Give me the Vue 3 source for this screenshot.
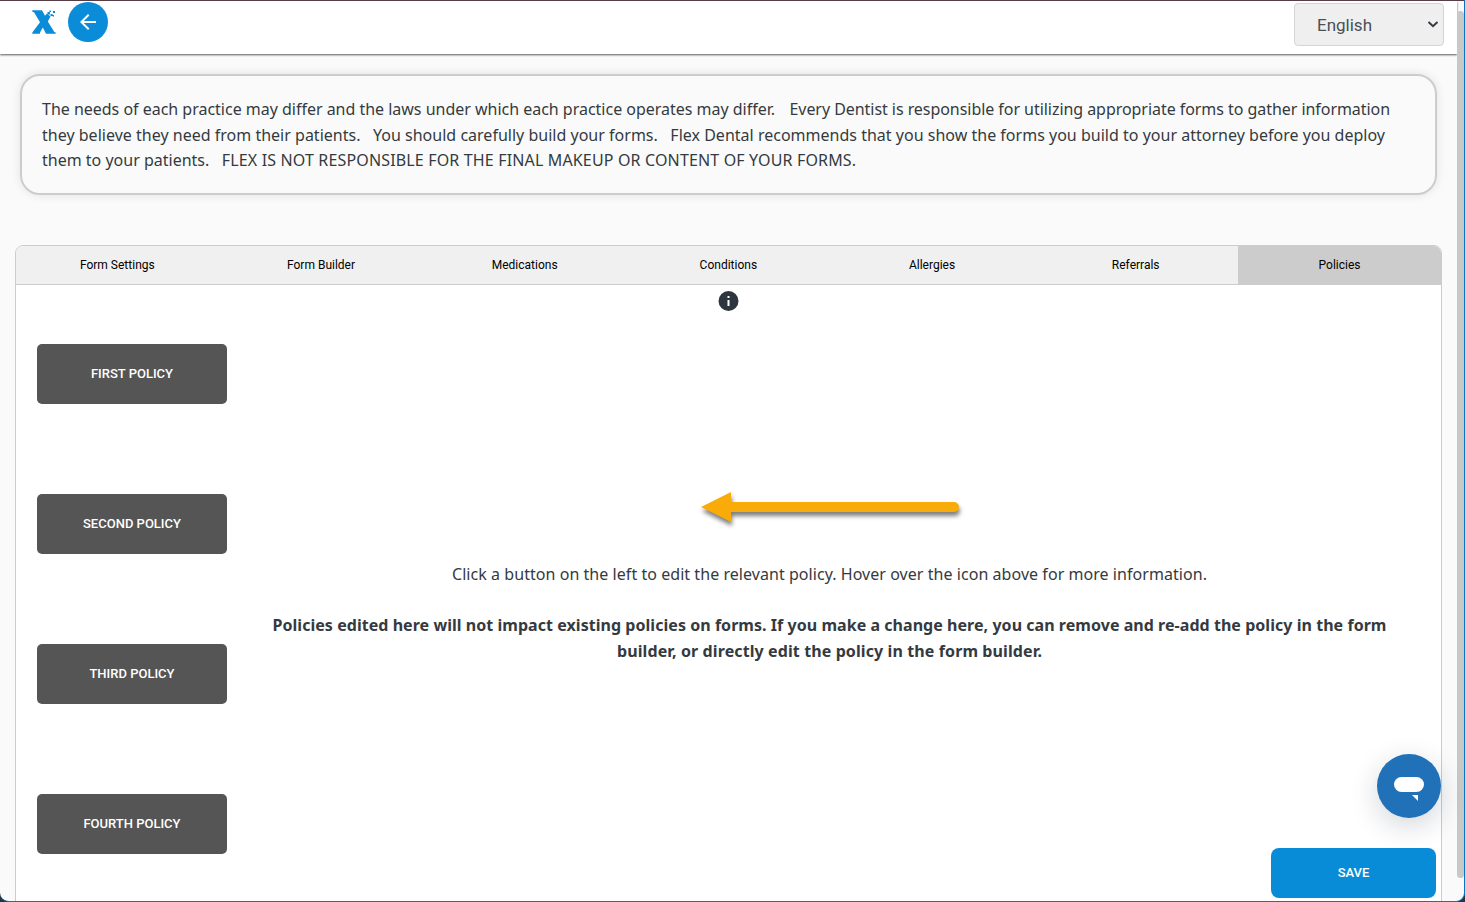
<script setup>
const tabs = ['Form Settings', 'Form Builder', 'Medications', 'Conditions', 'Allergies', 'Referrals', 'Policies']
const policies = ['First Policy', 'Second Policy', 'Third Policy', 'Fourth Policy']
</script>

<template>
  <div class="window">
    <div class="page">
      <header class="topbar">
        <svg class="logo" width="24" height="24" viewBox="0 0 24 24" fill="#0a8cd8">
          <path d="M0.300 0.300H10L13 5.800L15 3.500L18.500 6.500L15.800 11.500L22.300 22L23.700 22.500V23.700H14L10.800 17.500L8 22.500V23.700H0.300V22.500L8 12.300L2 2.300L0.300 1.800Z" />
          <path d="M15.500 2h2.500v2.500h-2.500zM18.500 4h2v2h-2zM17.500 .5h1.500v1.500h-1.500zM21 1h2v2h-2zM20.500 5h1.500v1.500H20.500z" />
        </svg>
        <button class="back" aria-label="Back">
          <svg width="24" height="24" viewBox="0 0 24 24" fill="#fff"><path d="M20 11H7.830l5.590-5.590L12 4l-8 8 8 8 1.410-1.410L7.830 13H20z" /></svg>
        </button>
        <div class="language">
          <span>English</span>
          <svg width="12" height="8" viewBox="0 0 12 8" fill="none" stroke="#343a40" stroke-width="2"><path d="M1.500 1L6 5.200L10.500 1" /></svg>
        </div>
      </header>

      <main>
        <section class="notice">
          <div class="l1">The needs of each practice may differ and the laws under which each practice operates may differ. &nbsp; <span class="next">Every Dentist is responsible for utilizing appropriate forms to gather information</span></div>
          <div class="l2">they believe they need from their patients. &nbsp; You should carefully build your forms. &nbsp; Flex Dental recommends that you show the forms you build to your attorney before you deploy</div>
          <div class="l3">them to your patients. &nbsp; <span class="caps">FLEX IS NOT RESPONSIBLE FOR THE FINAL MAKEUP OR CONTENT OF YOUR FORMS.</span></div>
        </section>

        <section class="panel">
          <nav class="tabs">
            <div v-for="tab in tabs" :key="tab" class="tab" :class="{ active: tab === 'Policies' }">{{ tab }}</div>
          </nav>
          <svg class="info" width="21" height="20" viewBox="0 0 21 20">
            <circle cx="10.500" cy="10" r="10" fill="#2d363f" />
            <path d="M9.500 5h2v2h-2zM9.500 9h2v6h-2z" fill="#fff" />
          </svg>
          <div class="content">
            <div class="policies">
              <button v-for="policy in policies" :key="policy" class="policy">{{ policy }}</button>
            </div>
            <div class="message">
              <svg class="arrow" width="270" height="40" viewBox="0 0 270 40">
                <path d="M1 17L31 2V12H254A5 5 0 0 1 254 22H31V32Z" fill="#f9ab09" />
              </svg>
              <div class="m1">Click a button on the left to edit the relevant policy. Hover over the icon above for more information.</div>
              <div class="strong m2">Policies edited here will not impact existing policies on forms. If you make a change here, you can remove and re-add the policy in the form</div>
              <div class="strong m3">builder, or directly edit the policy in the form builder.</div>
            </div>
          </div>
        </section>
      </main>
    </div>
    <div class="scrollbar"></div>
    <button class="chat" aria-label="Chat">
      <svg width="64" height="64" viewBox="0 0 64 64" fill="#fff"><rect x="17" y="23" width="30" height="15" rx="7.500" /><path d="M35 41h6v6z" /></svg>
    </button>
    <button class="save">Save</button>
  </div>
</template>

<style>
body { background: #26343f; }
</style>

<style scoped>
* { box-sizing: border-box; }
button { border: 0; padding: 0; font-family: Roboto, sans-serif; }
.window {
  position: relative;
  height: 902px;
  overflow: hidden;
  background: #fafafa;
  border: solid #0874c4;
  border-width: 1px 1px 1px 0;
  border-top-color: #563e45;
  border-radius: 0 0 9px 9px;
  font-family: "Noto Sans", sans-serif;
  color: #343a40;
}
.page { width: 1457px; }
.topbar {
  height: 53px;
  display: flex;
  align-items: flex-start;
  padding: 1px 13px 0 32px;
  background: #fff;
  box-shadow: 0 1px 2px rgba(0, 0, 0, .65);
}
.logo { margin-top: 8px; }
.back {
  display: grid;
  place-items: center;
  width: 40px;
  height: 40px;
  margin-left: 12px;
  border-radius: 50%;
  background: #0a8cd8;
}
.language {
  display: flex;
  align-items: center;
  justify-content: space-between;
  width: 150px;
  height: 43px;
  margin: 1px 0 0 auto;
  padding: 0 4px 0 22px;
  border: 1px solid #d5d5d5;
  border-radius: 4px;
  background: #efefef;
  color: #495057;
  font: 17px Roboto, sans-serif;
}
main { padding: 20px 15px 0; }
.notice {
  height: 121px;
  margin: 0 5px;
  padding: 21px 20px;
  border: 2px solid #ccc;
  border-radius: 20px;
  box-shadow: 0 0 10px rgba(0, 0, 0, .1);
  font-size: 16px;
  line-height: 25.600px;
  white-space: nowrap;
}
.l1 { letter-spacing: -.015px; }
.next { margin-left: 2px; letter-spacing: -.05px; }
.l2 { letter-spacing: .012px; }
.caps { letter-spacing: .155px; }
.panel {
  height: 700px;
  margin-top: 50px;
  border: 1px solid #ccc;
  border-radius: 8px 8px 0 0;
  background: #fff;
  overflow: hidden;
}
.tabs { display: flex; height: 39px; border-bottom: 1px solid #ccc; background: #f0f0f0; }
.tab { flex: 1; padding-right: 1px; text-align: center; font: 12px/38px Roboto, sans-serif; color: #000; }
.tab.active { flex: 0 0 203px; padding: 0; background: #ccc; }
.info { display: block; margin: 6px auto 0 702px; }
.content { display: flex; padding: 33px 20px 0 21px; }
.policies { display: flex; flex-direction: column; gap: 90px; width: 190px; }
.policy {
  height: 60px;
  padding-bottom: 2px;
  border-radius: 5px;
  background: #555;
  color: #fff;
  font-size: 13px;
  font-weight: 500;
  text-transform: uppercase;
}
.message {
  flex: 1;
  display: flex;
  flex-direction: column;
  align-items: center;
  padding: 146px 0 0 11px;
  font-size: 16px;
  line-height: 25.600px;
  white-space: nowrap;
}
.arrow { margin: 0 0 32px 10px; filter: drop-shadow(1px 4px 2px rgba(0, 0, 0, .5)); }
.strong { font-weight: 700; }
.m1 { letter-spacing: .05px; }
.m2 { margin-top: 25.500px; letter-spacing: .045px; }
.m3 { letter-spacing: .105px; }
.scrollbar { position: absolute; right: 0; top: 10px; width: 7px; height: 867px; border-radius: 4px; background: #c8c8c8; }
.chat {
  position: absolute;
  left: 1377px;
  top: 753px;
  width: 64px;
  height: 64px;
  border-radius: 50%;
  background: #2071b7;
  box-shadow: 0 8px 28px rgba(0, 30, 50, .18);
}
.save {
  position: absolute;
  left: 1271px;
  top: 847px;
  width: 165px;
  height: 50px;
  padding-bottom: 2px;
  border-radius: 8px;
  background: #088cd8;
  color: #fff;
  font-size: 13px;
  font-weight: 500;
  text-transform: uppercase;
}
</style>
